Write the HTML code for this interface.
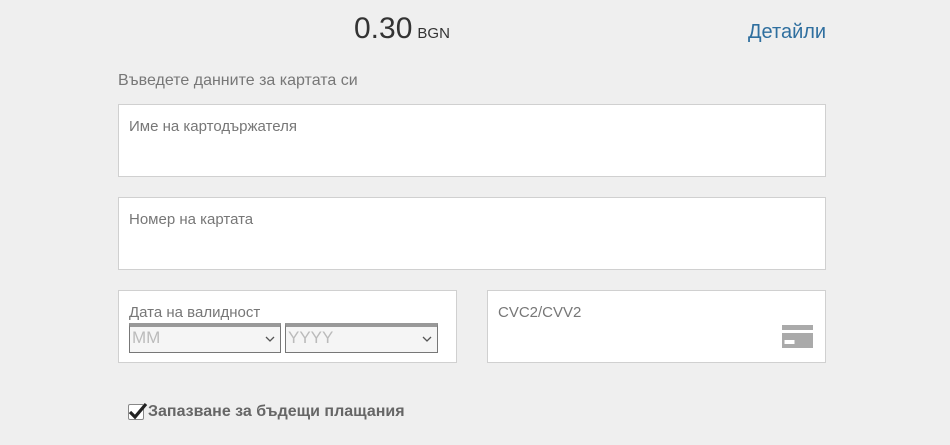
<!DOCTYPE html>
<html><head><meta charset="utf-8"><style>
body{margin:0;width:950px;height:445px;background:#efefef;font-family:"Liberation Sans",sans-serif;position:relative;overflow:hidden}
.a{position:absolute}
.box{position:absolute;background:#fff;border:1px solid #d0d0d0;box-sizing:border-box}
.lbl{position:absolute;left:10px;top:13px;font-size:15px;color:#777}
.sel{position:absolute;top:32px;height:30px;border:1px solid #777;border-top:4px solid #999;background:#f5f5f5;box-sizing:border-box;color:#bbb;font-size:17px;padding:1px 0 0 2px}
.sel svg{position:absolute;right:5px;top:9px}
</style></head><body>
<div class="a" style="left:354px;top:12px;font-size:30px;color:#333">0.30<span style="font-size:15px;margin-left:5px">BGN</span></div>
<div class="a" style="left:748px;top:21px;font-size:20px;color:#2f6f9f">Детайли</div>
<div class="a" style="left:118px;top:72px;font-size:16px;color:#777">Въведете данните за картата си</div>
<div class="box" style="left:118px;top:104px;width:708px;height:73px"><div class="lbl">Име на картодържателя</div></div>
<div class="box" style="left:118px;top:197px;width:708px;height:73px"><div class="lbl">Номер на картата</div></div>
<div class="box" style="left:118px;top:290px;width:339px;height:73px"><div class="lbl" style="top:13px">Дата на валидност</div>
<div class="sel" style="left:10px;width:152px">MM<svg width="10" height="6"><path d="M1 1l4 4 4-4" stroke="#555" fill="none" stroke-width="1.3"/></svg></div>
<div class="sel" style="left:166px;width:153px">YYYY<svg width="10" height="6"><path d="M1 1l4 4 4-4" stroke="#555" fill="none" stroke-width="1.3"/></svg></div>
</div>
<div class="box" style="left:487px;top:290px;width:339px;height:73px"><div class="lbl">CVC2/CVV2</div>
<svg class="a" style="left:294px;top:34px" width="31" height="24"><rect x="0" y="0" width="31" height="5" fill="#aaa"/><rect x="0" y="8" width="31" height="15" fill="#aaa"/><rect x="2.5" y="15" width="10" height="4" fill="#fff"/></svg></div>
<div class="a" style="left:128px;top:404px;width:16px;height:16px;background:#fff;border:1px solid #888;box-sizing:border-box;border-radius:2px"></div>
<svg class="a" style="left:128px;top:402px" width="20" height="18"><path d="M2 10l5 5L18 2" stroke="#222" stroke-width="3.2" fill="none"/></svg>
<div class="a" style="left:148px;top:403px;font-size:16px;font-weight:bold;color:#666">Запазване за бъдещи плащания</div>
</body></html>
